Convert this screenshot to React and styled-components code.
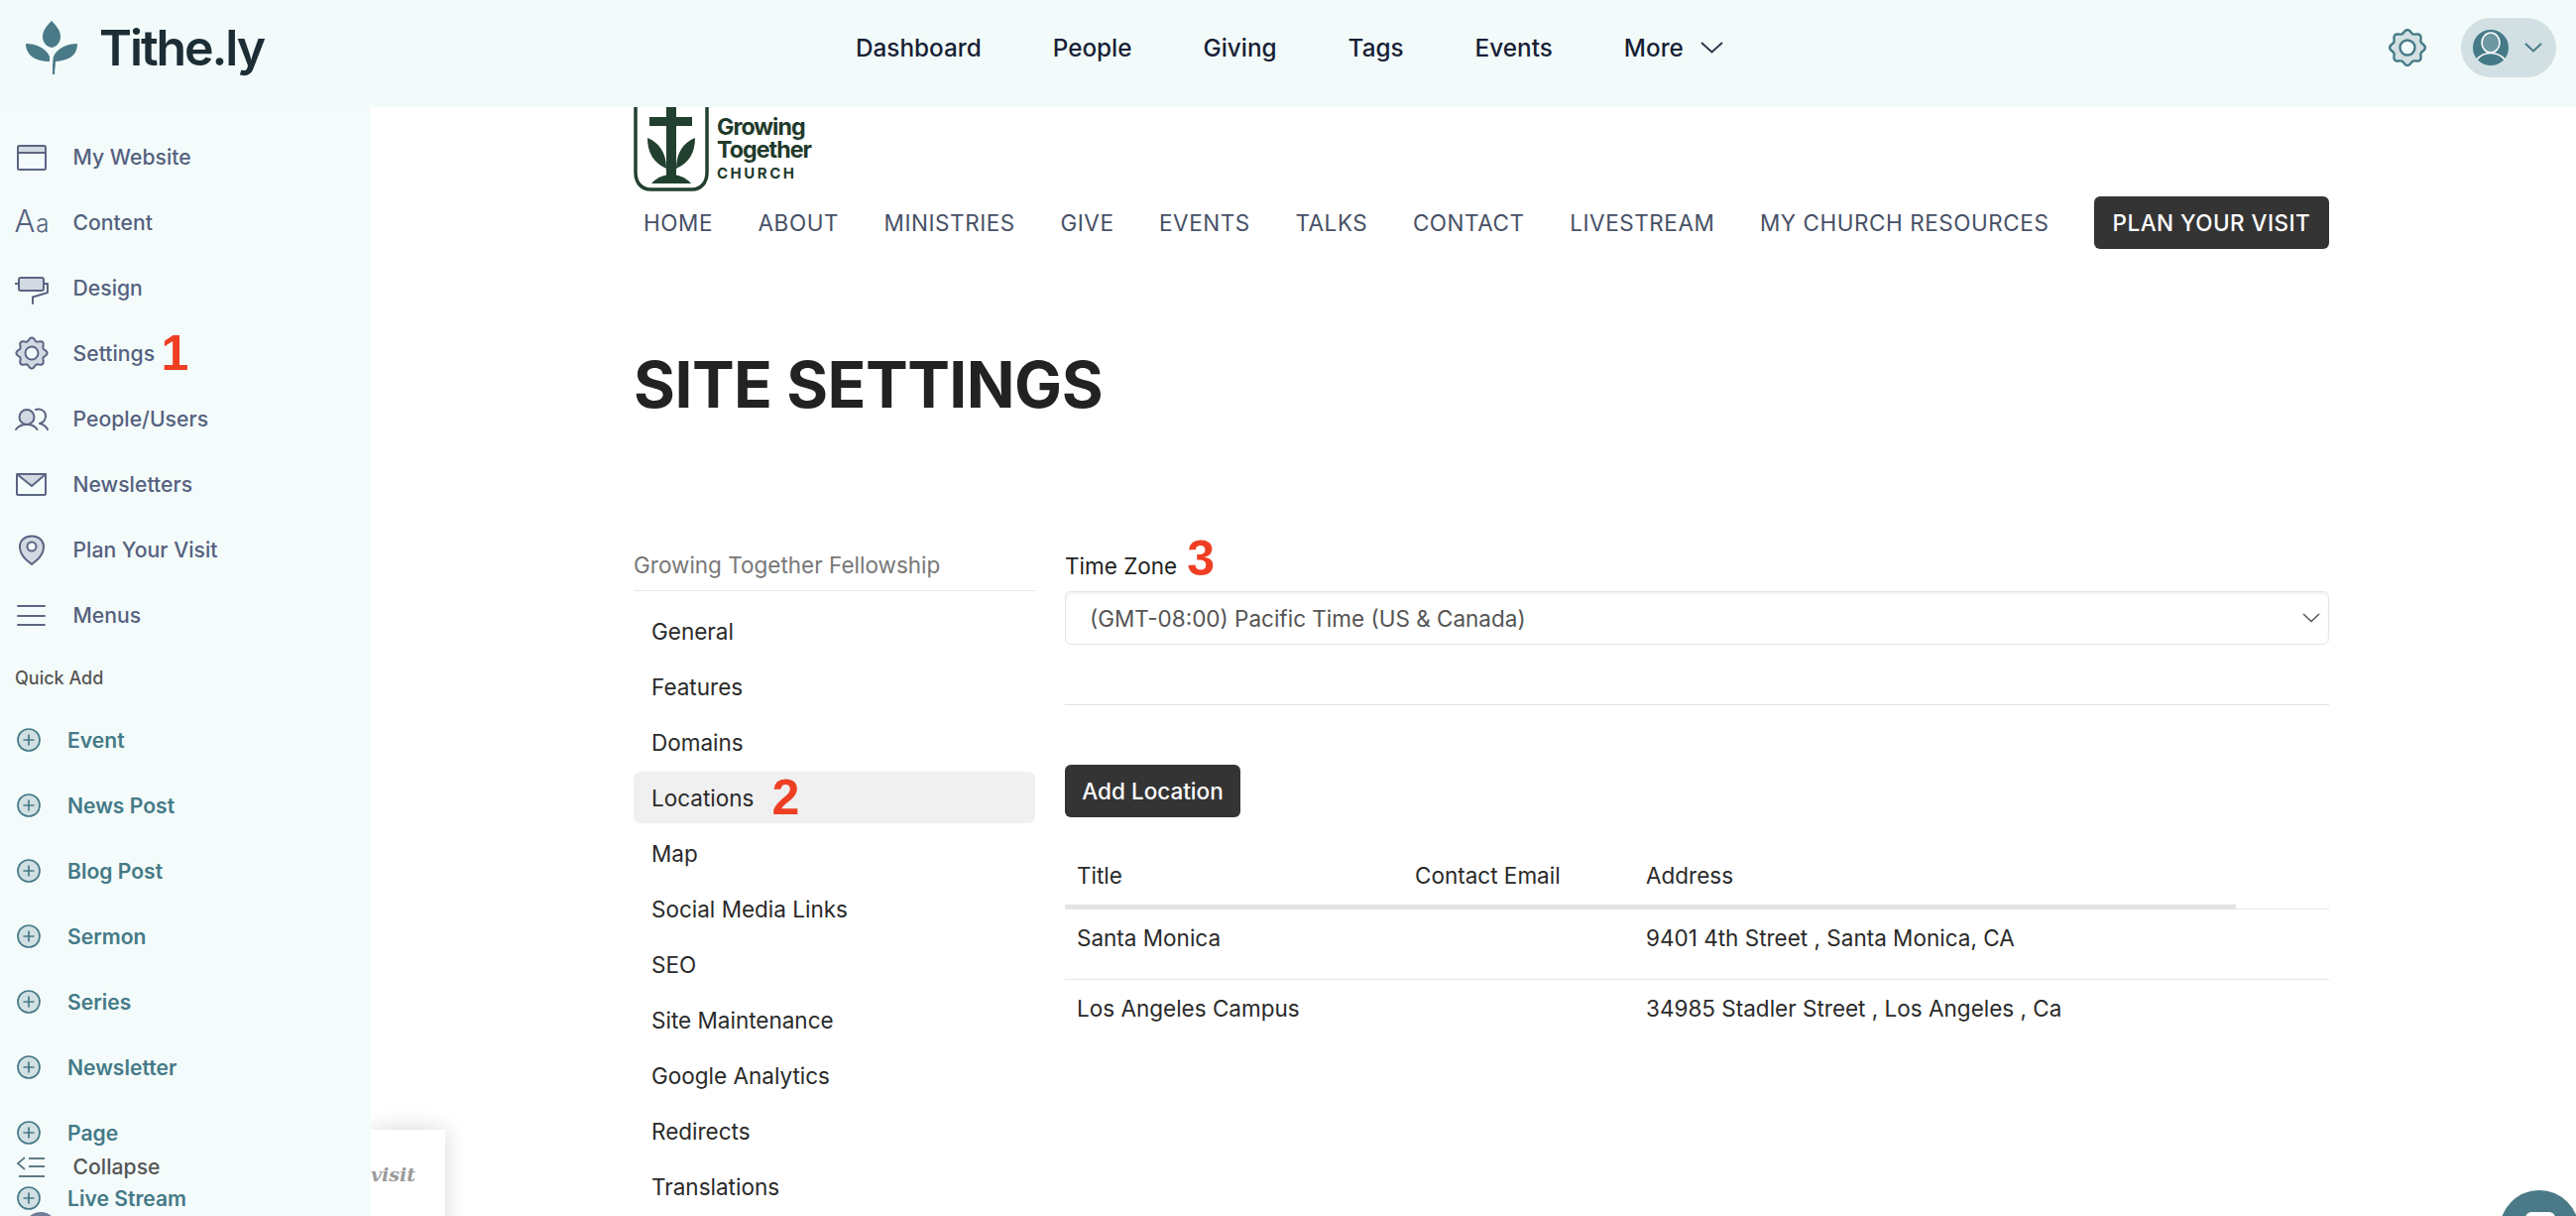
import React from 'react';
import styled, { createGlobalStyle } from 'styled-components';

const Global = createGlobalStyle`
  html, body { margin: 0; padding: 0; background: #fff; }
  * { box-sizing: border-box; }
  body { font-family: Inter, "Liberation Sans", sans-serif; }
`;

const TEAL = '#457a88';
const SLATE = '#55617f';
const TINT = '#d3d9e2';
const SIDE_BG = '#f4fcfb';

const gearPath = (cx, cy, R, amp, lobes) => {
  const n = 96;
  let d = '';
  for (let i = 0; i < n; i++) {
    const t = (i / n) * Math.PI * 2;
    const r = R + amp * Math.cos(lobes * t);
    d += `${i ? 'L' : 'M'}${(cx + r * Math.sin(t)).toFixed(2)} ${(cy - r * Math.cos(t)).toFixed(2)}`;
  }
  return d + 'Z';
};

const Page = styled.div`
  position: relative;
  width: 100vw;
  height: 100vh;
  overflow: hidden;
  display: flex;
  flex-direction: column;
  color: #222;
`;

const TopBar = styled.header`
  flex: 0 0 108px;
  display: grid;
  grid-template-columns: 863px 1fr auto;
  align-items: center;
  background: #f2fbfa;
  padding: 0 20px 12px 0;
`;

const Brand = styled.div`
  display: flex;
  align-items: center;
  gap: 22px;
  padding-left: 26px;
`;

const BrandName = styled.span`
  font-size: 50px;
  font-weight: 600;
  letter-spacing: -2.1px;
  line-height: 60px;
  color: #1c2d35;
`;

const TopNav = styled.nav`
  display: flex;
  align-items: center;
  gap: 72px;
`;

const TopLink = styled.a`
  display: flex;
  align-items: center;
  gap: 17px;
  font-size: 24.3px;
  font-weight: 550;
  color: #181f36;
`;

const TopRight = styled.div`
  display: flex;
  align-items: center;
  gap: 35px;
`;

const UserPill = styled.div`
  display: flex;
  align-items: center;
  gap: 16px;
  width: 96px;
  height: 60px;
  padding-left: 12px;
  border-radius: 30px;
  background: #d2e0e3;
`;

const Body = styled.div`
  flex: 1;
  display: flex;
  min-height: 0;
`;

const Sidebar = styled.aside`
  position: relative;
  z-index: 2;
  flex: 0 0 374px;
  background: ${SIDE_BG};
  padding-top: 17px;
`;

const SideRow = styled.a`
  display: flex;
  align-items: center;
  height: 66px;
  gap: 24.5px;
  padding-left: 15px;
  font-size: 21.2px;
  font-weight: 450;
  color: ${SLATE};
`;

const IconBox = styled.span`
  display: flex;
  align-items: center;
  justify-content: center;
  flex: 0 0 34px;
  width: 34px;
  min-width: 0;
  height: 34px;
`;

const AaGlyph = styled.span`
  display: flex;
  flex: none;
  align-items: baseline;
  font-family: Inter, sans-serif;
  font-weight: 300;
  font-size: 31px;
  line-height: 34px;
  color: ${SLATE};
  & > small { font-size: 24px; font-weight: 300; margin-left: 1px; }
`;

const SideHeading = styled.div`
  display: flex;
  align-items: center;
  height: 60px;
  padding-left: 15px;
  font-size: 18px;
  font-weight: 500;
  color: #555;
`;

const QuickRow = styled.a`
  display: flex;
  align-items: center;
  height: 66px;
  gap: 27px;
  padding-left: 17px;
  font-size: 21.1px;
  font-weight: 600;
  color: ${TEAL};
`;

const CollapseRow = styled.a`
  position: absolute;
  left: 0;
  top: 1051px;
  display: flex;
  align-items: center;
  height: 34px;
  gap: 24.5px;
  padding-left: 15px;
  font-size: 21.2px;
  font-weight: 450;
  color: #555;
`;

const SideAvatar = styled.div`
  position: absolute;
  left: 24px;
  top: 1114px;
  width: 34px;
  height: 34px;
  border-radius: 50%;
  background: #727c98;
`;

const Main = styled.main`
  position: relative;
  flex: 1;
  min-width: 0;
  padding: 0 249px 0 265px;
  overflow: hidden;
`;

const ChurchLogo = styled.div`
  display: flex;
  height: 85px;
  gap: 8px;
  color: #1f3a2b;
`;

const ChurchName = styled.div`
  display: flex;
  flex-direction: column;
  padding-top: 9px;
`;

const ChurchLine = styled.span`
  font-size: 23.2px;
  font-weight: 700;
  line-height: 23.2px;
  letter-spacing: -0.95px;
`;

const ChurchSub = styled.span`
  font-size: 15px;
  font-weight: 700;
  line-height: 24px;
  letter-spacing: 2.5px;
`;

const SiteNav = styled.nav`
  display: flex;
  align-items: center;
  justify-content: space-between;
  height: 53px;
  margin-top: 5px;
  padding-left: 10px;
`;

const SiteLink = styled.a`
  flex: none;
  white-space: nowrap;
  font-size: 22.5px;
  font-weight: 400;
  letter-spacing: 0.55px;
  color: #475066;
`;

const PlanButton = styled.a`
  display: flex;
  flex: none;
  align-items: center;
  justify-content: center;
  width: 237px;
  height: 53px;
  border-radius: 6px;
  background: #343434;
  color: #fff;
  font-size: 22.5px;
  font-weight: 500;
  letter-spacing: 0.45px;
  white-space: nowrap;
`;

const Title = styled.h1`
  margin: 97px 0 0;
  font-size: 64px;
  font-weight: 700;
  line-height: 80px;
  letter-spacing: -0.5px;
  color: #222;
`;

const Columns = styled.section`
  display: grid;
  grid-template-columns: 405px 1fr;
  gap: 30px;
  margin-top: 126px;
`;

const SideTitle = styled.div`
  font-size: 22.5px;
  line-height: 32px;
  padding-bottom: 9px;
  border-bottom: 1px solid #e8e8e8;
  color: #777;
`;

const SettingsList = styled.div`
  display: flex;
  flex-direction: column;
  gap: 4.1px;
  margin-top: 14px;
`;

const SettingsItem = styled.a`
  display: flex;
  align-items: center;
  gap: 18px;
  height: 52px;
  padding-left: 18px;
  border-radius: 7px;
  font-size: 22.5px;
  color: #2a2a2a;
  background: ${p => (p.$active ? '#f0f0f0' : 'transparent')};
`;

const Marker = styled.span`
  font-family: "Liberation Sans", Arial, sans-serif;
  font-size: 50px;
  line-height: 40px;
  font-weight: 700;
  color: #ee3f23;
`;

const SideMarker = styled(Marker)`
  margin-left: -18px;
`;

const FieldMarker = styled(Marker)`
  margin-top: -14px;
`;

const FieldLabel = styled.label`
  display: flex;
  align-items: center;
  gap: 10px;
  height: 32px;
  font-size: 22.5px;
  color: #222;
  margin-bottom: 10px;
`;

const SelectBox = styled.div`
  display: flex;
  align-items: center;
  justify-content: space-between;
  height: 54px;
  padding: 0 8px 0 24px;
  border: 1px solid #e4e4e4;
  border-radius: 6px;
  box-shadow: inset 0 2px 3px rgba(0, 0, 0, 0.05);
  font-size: 22.5px;
  color: #555;
`;

const Rule = styled.hr`
  margin: 60px 0;
  border: 0;
  border-top: 1px solid #e2e2e2;
`;

const DarkButton = styled.a`
  display: inline-flex;
  align-items: center;
  justify-content: center;
  width: 177px;
  height: 53px;
  border-radius: 6px;
  background: #343434;
  color: #fff;
  font-size: 22.5px;
  font-weight: 500;
`;

const TableHead = styled.div`
  position: relative;
  display: grid;
  grid-template-columns: 341px 233px 1fr;
  align-items: center;
  height: 68px;
  margin-top: 25px;
  padding-left: 12px;
  border-bottom: 1px solid #e6e6e6;
  font-size: 22.5px;
  color: #2a2a2a;
  &::after {
    content: '';
    position: absolute;
    left: 0;
    bottom: 0;
    width: 1181px;
    height: 4px;
    background: #e3e3e3;
  }
`;

const TableRow = styled.div`
  display: grid;
  grid-template-columns: 341px 233px 1fr;
  height: ${p => p.$h}px;
  padding: 16px 0 0 12px;
  border-bottom: ${p => (p.$line ? '1px solid #e6e6e6' : '0')};
  font-size: 22.5px;
  line-height: 26px;
  color: #2a2a2a;
`;

const FloatCard = styled.div`
  position: absolute;
  left: 0;
  top: 1031px;
  width: 75px;
  height: 120px;
  padding: 32px 31px 0 0;
  text-align: right;
  background: #fff;
  box-shadow: 0 0 22px rgba(0, 0, 0, 0.16);
  font-family: "DejaVu Serif", serif;
  font-style: italic;
  font-weight: 700;
  font-size: 19px;
  line-height: 26px;
  color: #9a9a9a;
`;

const ChatBubble = styled.div`
  position: absolute;
  left: 2521px;
  top: 1200px;
  width: 80px;
  height: 80px;
  border-radius: 50%;
  background: #4a7a87;
  z-index: 3;
  &::after {
    content: '';
    position: absolute;
    left: 26px;
    top: 22px;
    width: 30px;
    height: 24px;
    border-radius: 6px;
    background: #fff;
  }
`;

const LeafLogo = () => (
  <svg width="52" height="54" viewBox="0 0 52 54" fill="#4a7a87">
    <path d="M26 0C31 5 35 10 35 16C35 22 31 26 26 27C21 26 17 22 17 16C17 10 21 5 26 0Z" />
    <path d="M0 23C10 23 20 27 24 36L24 41C12 41 0 36 0 23Z" />
    <path d="M52 23C52 36 42 40 30 41C30 45 29 50 29 54L27 54C27 48 27 40 28 36C32 27 42 23 52 23Z" />
  </svg>
);

const ChurchMark = () => (
  <svg width="76" height="85" viewBox="0 0 76 85" fill="#22402f">
    <path d="M2 0V66C2 76 8 83 17 83H59C68 83 74 76 74 66V0" fill="none" stroke="#22402f" strokeWidth="3.5" />
    <rect x="33" y="0" width="10" height="74" />
    <rect x="16" y="10" width="43" height="9" />
    <path d="M33 62C20 56 14 46 14 31C26 36 33 46 33 62Z" />
    <path d="M43 62C56 56 62 46 62 31C50 36 43 46 43 62Z" />
    <path d="M18 77C24 70 32 68 38 68C44 68 52 70 58 77Z" />
  </svg>
);

const Chevron = ({ w = 23, h = 12, color = '#2a3245', sw = 1.8 }) => (
  <svg width={w} height={h} viewBox={`0 0 ${w} ${h}`} fill="none" stroke={color} strokeWidth={sw}>
    <path d={`M1 1L${w / 2} ${h - 1.5}L${w - 1} 1`} />
  </svg>
);

const TopGear = () => (
  <svg width="38" height="38" viewBox="0 0 38 38">
    <path d={gearPath(19, 19, 16.3, 1.6, 8)} fill="#d2e0e3" stroke={TEAL} strokeWidth="2.4" />
    <circle cx="19" cy="19" r="7.5" fill="#f2fbfa" stroke={TEAL} strokeWidth="2.4" />
  </svg>
);

const Avatar = () => (
  <svg width="36" height="36" viewBox="0 0 36 36">
    <circle cx="18" cy="18" r="18" fill={TEAL} />
    <ellipse cx="18" cy="13" rx="9" ry="10" fill="#6e97a2" stroke="#fff" strokeWidth="1.6" />
    <path d="M4 30C8 25 13 23.5 18 23.5C23 23.5 28 25 32 30" fill="none" stroke="#fff" strokeWidth="1.6" />
  </svg>
);

const Svg34 = ({ children }) => (
  <svg width="34" height="34" viewBox="0 0 34 34" fill="none" stroke="#5a6583" strokeWidth="2" strokeLinejoin="round" strokeLinecap="round">
    {children}
  </svg>
);

const WebsiteIcon = () => (
  <Svg34>
    <rect x="3" y="6" width="28" height="7" fill={TINT} stroke="none" />
    <rect x="3" y="6" width="28" height="24" rx="1.5" />
    <path d="M3 13H31" />
  </Svg34>
);

const RollerIcon = () => (
  <Svg34>
    <rect x="4" y="7" width="25" height="13" rx="2" fill={TINT} />
    <path d="M0 13H4M29 13H33V22L18 26.5V33" />
  </Svg34>
);

const GearIcon = () => (
  <Svg34>
    <path d={gearPath(17, 17, 14, 1.6, 8)} fill={TINT} />
    <circle cx="17" cy="17" r="6.5" fill={SIDE_BG} />
  </Svg34>
);

const PeopleIcon = () => (
  <Svg34>
    <circle cx="12" cy="15.5" r="7.5" fill={TINT} />
    <path d="M1 28C4 24 8 23 12 23C16 23 20 24 22.5 28" />
    <path d="M21 8C22 7.6 23 7.5 24 7.5C28.5 7.5 31 11 31 14.5C31 18 28.5 21 25 22C29 23 31.5 25 33 28" />
  </Svg34>
);

const MailIcon = () => (
  <Svg34>
    <path d="M2 7H31L17 19Z" fill={TINT} stroke="none" />
    <rect x="2" y="7" width="29" height="21" rx="1.5" />
    <path d="M2 7L17 19L31 7" />
  </Svg34>
);

const PinIcon = () => (
  <Svg34>
    <path d="M17 32C12 28 5 23 5 14C5 8 10 3.5 17 3.5C24 3.5 29 8 29 14C29 23 22 28 17 32Z" fill={TINT} />
    <circle cx="17" cy="14" r="4.5" fill={SIDE_BG} />
  </Svg34>
);

const MenuIcon = () => (
  <Svg34>
    <path d="M3 8H30M3 18H30M3 27H30" strokeWidth="1.9" />
  </Svg34>
);

const CollapseIcon = () => (
  <svg width="34" height="34" viewBox="0 0 34 34" fill="none" stroke="#5f7a86" strokeWidth="1.8">
    <path d="M14 9H30M14 17H30M4 27H30M10 8L3 14L10 20" />
  </svg>
);

const PlusIcon = () => (
  <svg width="24" height="24" viewBox="0 0 24 24" fill="#d1e0e3" stroke={TEAL} strokeWidth="1.7">
    <circle cx="12" cy="12" r="11" />
    <path d="M12 6.5V17.5M6.5 12H17.5" fill="none" />
  </svg>
);

const mainLinks = [
  ['My Website', <WebsiteIcon />],
  ['Content', <AaGlyph>A<small>a</small></AaGlyph>],
  ['Design', <RollerIcon />],
  ['Settings', <GearIcon />, '1'],
  ['People/Users', <PeopleIcon />],
  ['Newsletters', <MailIcon />],
  ['Plan Your Visit', <PinIcon />],
  ['Menus', <MenuIcon />],
];

const quickLinks = ['Event', 'News Post', 'Blog Post', 'Sermon', 'Series', 'Newsletter', 'Page', 'Live Stream'];
const topLinks = ['Dashboard', 'People', 'Giving', 'Tags', 'Events'];
const siteLinks = ['HOME', 'ABOUT', 'MINISTRIES', 'GIVE', 'EVENTS', 'TALKS', 'CONTACT', 'LIVESTREAM', 'MY CHURCH RESOURCES'];
const settingsLinks = ['General', 'Features', 'Domains', 'Locations', 'Map', 'Social Media Links', 'SEO', 'Site Maintenance', 'Google Analytics', 'Redirects', 'Translations'];

export default function App() {
  return (
    <Page>
      <Global />
      <TopBar>
        <Brand>
          <LeafLogo />
          <BrandName>Tithe.ly</BrandName>
        </Brand>
        <TopNav>
          {topLinks.map(l => <TopLink key={l}>{l}</TopLink>)}
          <TopLink>More <Chevron /></TopLink>
        </TopNav>
        <TopRight>
          <TopGear />
          <UserPill>
            <Avatar />
            <Chevron w={18} h={10} color={TEAL} sw={2} />
          </UserPill>
        </TopRight>
      </TopBar>
      <Body>
        <Sidebar>
          {mainLinks.map(([label, icon, mark]) => (
            <SideRow key={label}>
              <IconBox>{icon}</IconBox>
              <span>{label}</span>
              {mark && <SideMarker>{mark}</SideMarker>}
            </SideRow>
          ))}
          <SideHeading>Quick Add</SideHeading>
          {quickLinks.map(l => (
            <QuickRow key={l}>
              <PlusIcon />
              {l}
            </QuickRow>
          ))}
          <CollapseRow>
            <IconBox><CollapseIcon /></IconBox>
            <span>Collapse</span>
          </CollapseRow>
          <SideAvatar />
        </Sidebar>
        <Main>
          <ChurchLogo>
            <ChurchMark />
            <ChurchName>
              <ChurchLine>Growing</ChurchLine>
              <ChurchLine>Together</ChurchLine>
              <ChurchSub>CHURCH</ChurchSub>
            </ChurchName>
          </ChurchLogo>
          <SiteNav>
            {siteLinks.map(l => <SiteLink key={l}>{l}</SiteLink>)}
            <PlanButton>PLAN YOUR VISIT</PlanButton>
          </SiteNav>
          <Title>SITE SETTINGS</Title>
          <Columns>
            <div>
              <SideTitle>Growing Together Fellowship</SideTitle>
              <SettingsList>
                {settingsLinks.map(l => (
                  <SettingsItem key={l} $active={l === 'Locations'}>
                    {l}
                    {l === 'Locations' && <Marker>2</Marker>}
                  </SettingsItem>
                ))}
              </SettingsList>
            </div>
            <div>
              <FieldLabel>
                Time Zone
                <FieldMarker>3</FieldMarker>
              </FieldLabel>
              <SelectBox>
                (GMT-08:00) Pacific Time (US &amp; Canada)
                <Chevron w={18} h={10} color="#555" sw={1.5} />
              </SelectBox>
              <Rule />
              <DarkButton>Add Location</DarkButton>
              <TableHead>
                <span>Title</span>
                <span>Contact Email</span>
                <span>Address</span>
              </TableHead>
              <TableRow $h={71} $line>
                <span>Santa Monica</span>
                <span />
                <span>9401 4th Street , Santa Monica, CA</span>
              </TableRow>
              <TableRow $h={70}>
                <span>Los Angeles Campus</span>
                <span />
                <span>34985 Stadler Street , Los Angeles , Ca</span>
              </TableRow>
            </div>
          </Columns>
          <FloatCard>visit</FloatCard>
        </Main>
      </Body>
      <ChatBubble />
    </Page>
  );
}
